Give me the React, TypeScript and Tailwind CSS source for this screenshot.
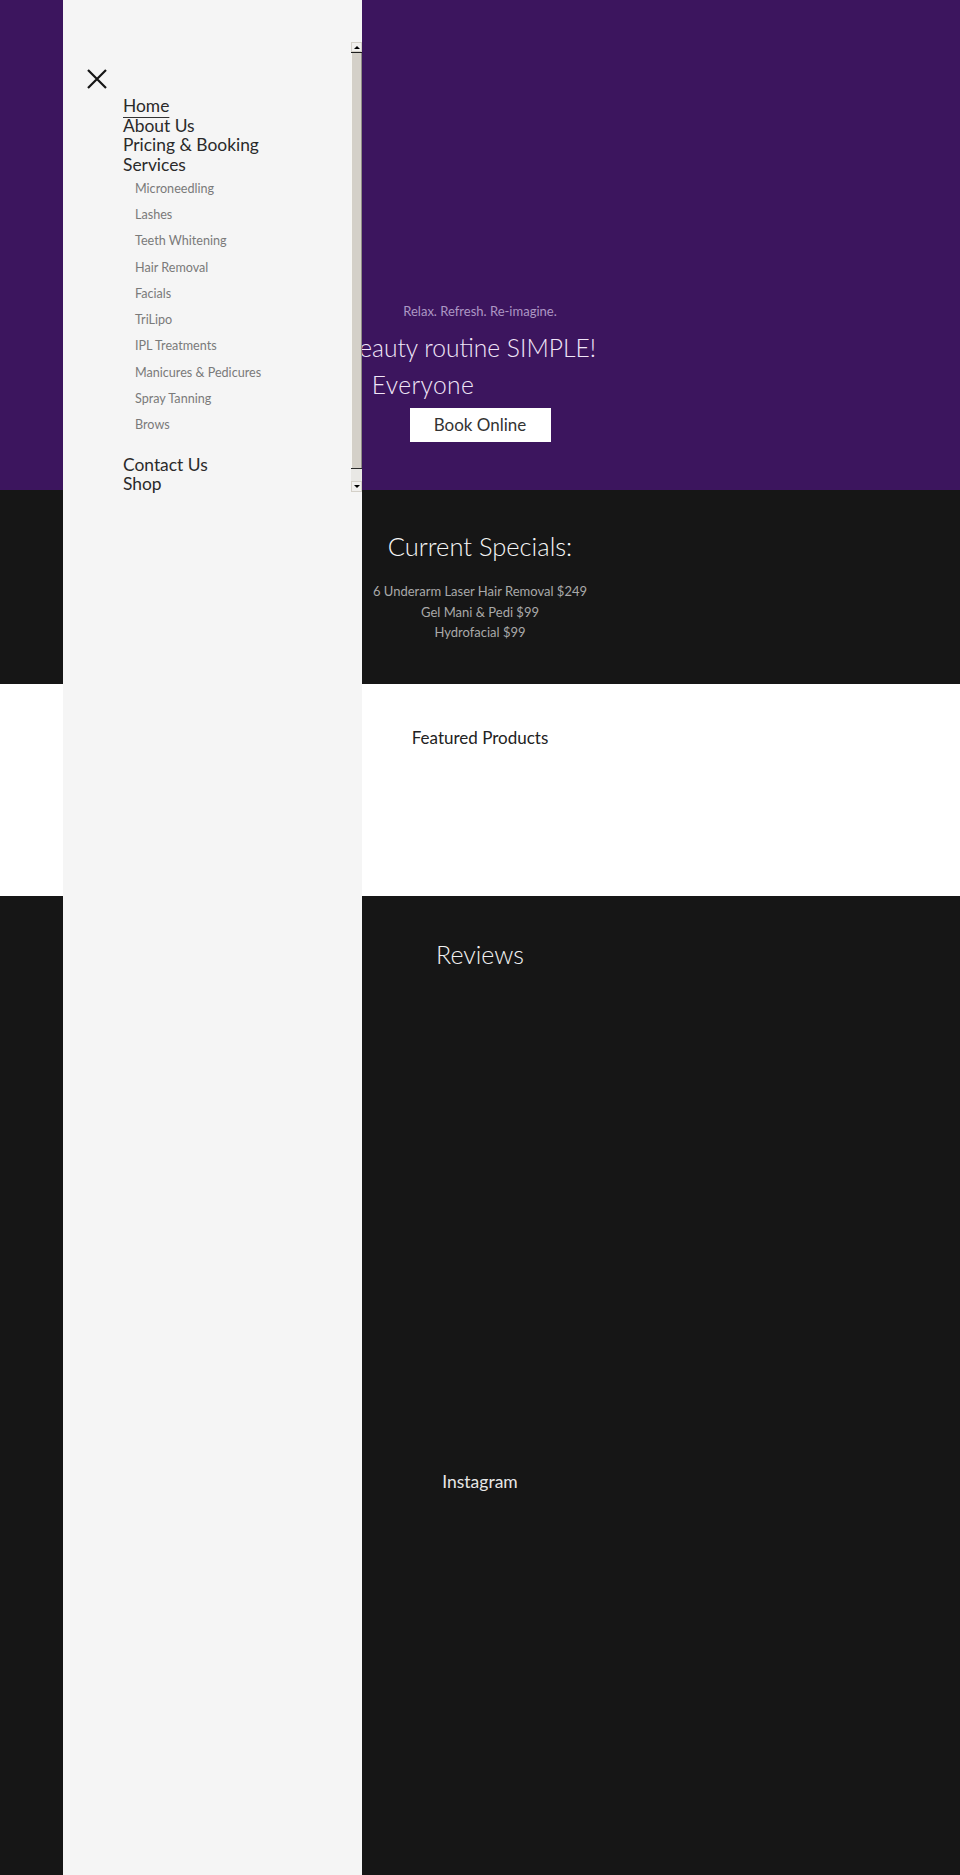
const mainLinks = ["Home", "About Us", "Pricing & Booking", "Services"];

const serviceLinks = [
  "Microneedling",
  "Lashes",
  "Teeth Whitening",
  "Hair Removal",
  "Facials",
  "TriLipo",
  "IPL Treatments",
  "Manicures & Pedicures",
  "Spray Tanning",
  "Brows",
];

const specials = [
  "6 Underarm Laser Hair Removal $249",
  "Gel Mani & Pedi $99",
  "Hydrofacial $99",
];

function FakeScrollbar() {
  return (
    <div className="absolute right-0 top-[42px] flex h-[450px] w-[11px] flex-col">
      <div className="flex h-[10px] items-center justify-center border border-[#d4d0c8] bg-[#f1f0ee]">
        <span className="h-0 w-0 border-x-[3px] border-b-[3px] border-x-transparent border-b-black" />
      </div>
      <div className="h-px bg-[#1e1e1e]" />
      <div className="flex-1 border-l border-r border-l-[#f7f6f3] border-r-[#8f8c86] bg-[#d4d0c8]" />
      <div className="h-px bg-[#2a2a2a]" />
      <div className="h-[12px] bg-[#e9e8e5]" />
      <div className="flex h-[11px] items-center justify-center border border-[#d4d0c8] bg-[#f1f0ee]">
        <span className="h-0 w-0 border-x-[3px] border-t-[3px] border-x-transparent border-t-black" />
      </div>
    </div>
  );
}

function CloseIcon() {
  return (
    <svg width="20" height="20" viewBox="0 0 20 20" fill="none" stroke="#151515" strokeWidth="2.2">
      <path d="M1 1 19 19M19 1 1 19" />
    </svg>
  );
}

function Drawer() {
  return (
    <aside className="absolute left-[63px] top-0 h-full w-[299px] bg-[#f5f5f5]">
      <FakeScrollbar />
      <button type="button" className="ml-[24px] mt-[69px] block">
        <CloseIcon />
      </button>
      <nav className="ml-[60px] mt-[7px] text-[17.4px] leading-[19.6px] text-[#2a2a2a]">
        {mainLinks.map((link) => (
          <a
            key={link}
            href="#"
            className={`block w-fit ${
              link === "Home" ? "underline decoration-[#333] decoration-1 underline-offset-[5px]" : ""
            }`}
          >
            {link}
          </a>
        ))}
        <div className="ml-[12px] mt-[1.5px] text-[12.6px] leading-[26.25px] text-[#7a7a7a]">
          {serviceLinks.map((link) => (
            <a key={link} href="#" className="block w-fit">
              {link}
            </a>
          ))}
        </div>
        <a href="#" className="mt-[16.5px] block w-fit">
          Contact Us
        </a>
        <a href="#" className="block w-fit">
          Shop
        </a>
      </nav>
    </aside>
  );
}

export default function App() {
  return (
    <div className="relative min-h-[1875px] w-full font-['Lato',sans-serif]">
      <section className="flex h-[490px] flex-col items-center justify-end bg-[#3c155e] pb-[48px] text-center">
        <p className="text-[13px] leading-5 text-[#ad97c4]">Relax. Refresh. Re-imagine.</p>
        <h1 className="mt-[8px] w-full text-[24.6px] font-light leading-[37px] text-[#f1e6f8]">
          <span className="block pr-[164px]">Keeping your beauty routine SIMPLE!</span>
          <span className="block pr-[162px] tracking-[0.4px] [word-spacing:10px]">for Everyone</span>
        </h1>
        <a
          href="#"
          className="mt-[5px] flex h-[34px] w-[141px] items-center justify-center bg-white text-[17px] text-[#333]"
        >
          Book Online
        </a>
      </section>

      <section className="h-[194px] bg-[#161616] pt-[40px] text-center">
        <h2 className="text-[25.5px] font-light leading-8 text-[#f6f6f6]">Current Specials:</h2>
        <div className="mt-[19px] text-[13px] leading-[20.5px] text-[#a9a9a9]">
          {specials.map((item) => (
            <p key={item}>{item}</p>
          ))}
        </div>
      </section>

      <section className="h-[212px] bg-white pt-[42px] text-center">
        <h2 className="text-[17px] leading-6 text-[#222]">Featured Products</h2>
      </section>

      <section className="h-[979px] bg-[#161616] pt-[42px] text-center">
        <h2 className="text-[25px] font-light leading-8 text-[#f2f2f2]">Reviews</h2>
        <div className="h-[500px]" />
        <h2 className="text-[17.5px] leading-6 text-[#e6e6e6]">Instagram</h2>
      </section>

      <Drawer />
    </div>
  );
}
